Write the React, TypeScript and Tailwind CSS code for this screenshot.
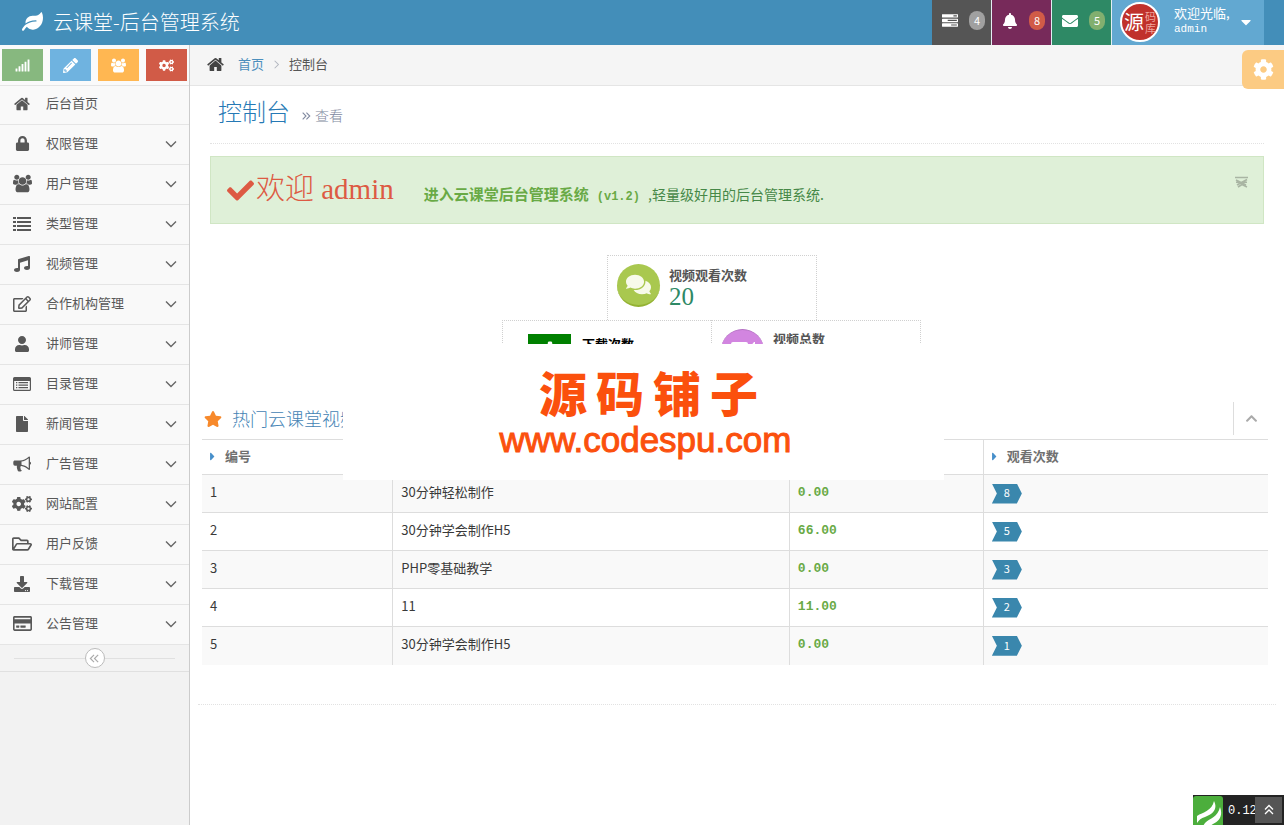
import React from 'react';
import {
  FaBell,
  FaCaretDown,
  FaCaretRight,
  FaCheck,
  FaChevronUp,
  FaCog,
  FaCogs,
  FaComments,
  FaDownload,
  FaEnvelope,
  FaFile,
  FaLeaf,
  FaLock,
  FaMusic,
  FaPencilAlt,
  FaPlus,
  FaRegCreditCard,
  FaRegEdit,
  FaRegFolderOpen,
  FaSignal,
  FaStar,
  FaUser,
} from 'react-icons/fa';

type IconProps = { className?: string };

const HomeIcon = ({ className }: IconProps) => (
  <svg viewBox="64 128 1664 1536" fill="currentColor" className={className}>
    <path d="M1472 992v480q0 26-19 45t-45 19h-384v-384h-256v384h-384q-26 0-45-19t-19-45v-480q0-1 .5-3t.5-3l575-474 575 474q1 2 1 6zm223-69l-62 74q-8 9-21 11h-3q-13 0-21-7l-692-577-692 577q-12 8-24 7-13-2-21-11l-62-74q-8-10-7-23.5t11-21.5l719-599q32-26 76-26t76 26l244 204v-195q0-14 9-23t23-9h192q14 0 23 9t9 23v408l219 182q10 8 11 21.5t-7 23.5z" />
  </svg>
);

const GroupIcon = ({ className }: IconProps) => (
  <svg viewBox="64 0 1920 1792" fill="currentColor" className={className}>
    <path d="M657 896q-162 5-265 128h-134q-82 0-138-40.5t-56-118.5q0-353 124-353 6 0 43.5 21t97.5 42.5 119 21.5q67 0 133-23-5 37-5 66 0 139 81 256zm1071 637q0 120-73 189.5t-194 69.5h-874q-121 0-194-69.5t-73-189.5q0-53 3.5-103.5t14-109 26.5-108.5 43-97.5 62-81 85.5-53.5 111.5-20q10 0 43 21.5t73 48 107 48 135 21.5 135-21.5 107-48 73-48 43-21.5q61 0 111.5 20t85.5 53.5 62 81 43 97.5 26.5 108.5 14 109 3.5 103.5zm-1024-1277q0 106-75 181t-181 75-181-75-75-181 75-181 181-75 181 75 75 181zm704 384q0 159-112.5 271.5t-271.5 112.5-271.5-112.5-112.5-271.5 112.5-271.5 271.5-112.5 271.5 112.5 112.5 271.5zm576 225q0 78-56 118.5t-138 40.5h-134q-103-123-265-128 81-117 81-256 0-29-5-66 66 23 133 23 59 0 119-21.5t97.5-42.5 43.5-21q124 0 124 353zm-128-609q0 106-75 181t-181 75-181-75-75-181 75-181 181-75 181 75 75 181z" />
  </svg>
);

const TasksIcon = ({ className }: IconProps) => (
  <svg viewBox="0 128 1792 1536" fill="currentColor" className={className}>
    <path d="M1024 1408h640v-128h-640v128zm-384-512h1024v-128h-1024v128zm640-512h384v-128h-384v128zm512 832v256q0 26-19 45t-45 19h-1664q-26 0-45-19t-19-45v-256q0-26 19-45t45-19h1664q26 0 45 19t19 45zm0-512v256q0 26-19 45t-45 19h-1664q-26 0-45-19t-19-45v-256q0-26 19-45t45-19h1664q26 0 45 19t19 45zm0-512v256q0 26-19 45t-45 19h-1664q-26 0-45-19t-19-45v-256q0-26 19-45t45-19h1664q26 0 45 19t19 45z" />
  </svg>
);

const ListIcon = ({ className }: IconProps) => (
  <svg viewBox="0 0 18 18" fill="currentColor" className={className}>
    <path d="M0 2h3v2H0zM4 2h14v2H4zM0 6h3v2H0zM4 6h14v2H4zM0 10h3v2H0zM4 10h14v2H4zM0 14h3v2H0zM4 14h14v2H4z" />
  </svg>
);

const ListAltIcon = ({ className }: IconProps) => (
  <svg viewBox="0 0 18 18" fill="currentColor" className={className}>
    <path
      fillRule="evenodd"
      d="M1.5 2h15A1.5 1.5 0 0 1 18 3.5v11a1.5 1.5 0 0 1-1.5 1.5h-15A1.5 1.5 0 0 1 0 14.5v-11A1.5 1.5 0 0 1 1.5 2zM1.2 6v8.2q0 .6.6.6h14.4q.6 0 .6-.6V6z"
    />
    <path d="M3 7h1.3v1.2H3zM5.5 7H15v1.2H5.5zM3 9.5h1.3v1.2H3zM5.5 9.5H15v1.2H5.5zM3 12h1.3v1.2H3zM5.5 12H15v1.2H5.5z" />
  </svg>
);

const BullhornIcon = ({ className }: IconProps) => (
  <svg viewBox="0 0 18 18" className={className}>
    <path
      fill="currentColor"
      fillRule="evenodd"
      d="M16 1.5c.6 0 1 .4 1 1v4.2a1.6 1.6 0 0 1 0 3v4.3c0 .6-.4 1-1 1-2.6-2.2-5-3.6-7.8-4-1 .3-1.2 1.5-.5 2.1-.6 1 .2 1.7 1.2 2.5-.6 1.2-3 1.3-4 .4-.6-1.9-1.4-3.400-.9-5.300H2A1.7 1.7 0 0 1 .3 9V7.2C.3 6.3 1 5.6 2 5.6h5c3 0 6-1.6 9-4.1zm-.3 1.8C13.3 5.2 11 6.3 8.500 6.600v3.200c2.500.3 4.800 1.500 7.200 3.400z"
    />
  </svg>
);

const CameraIcon = ({ className }: IconProps) => (
  <svg viewBox="0 0 26 20" fill="currentColor" className={className}>
    <path d="M3 1h13a2 2 0 0 1 2 2v14a2 2 0 0 1-2 2H3a2 2 0 0 1-2-2V3a2 2 0 0 1 2-2zM19 7l5-6h1v18h-1l-5-6z" />
  </svg>
);

const AngleIcon = ({ className }: IconProps) => (
  <svg viewBox="0 0 12 12" fill="none" stroke="currentColor" strokeWidth="1.4" className={className}>
    <path d="M1 3.5l5 5 5-5" />
  </svg>
);

const DoubleAngleIcon = ({ className }: IconProps) => (
  <svg viewBox="0 0 12 12" fill="none" stroke="currentColor" strokeWidth="1.3" className={className}>
    <path d="M2 2l4 4-4 4M6.5 2l4 4-4 4" />
  </svg>
);

const SHORTCUTS = [
  { label: '统计', icon: FaSignal, color: 'bg-[#87b87f]' },
  { label: '编辑', icon: FaPencilAlt, color: 'bg-[#6fb3e0]' },
  { label: '用户', icon: GroupIcon, color: 'bg-[#ffb752]' },
  { label: '设置', icon: FaCogs, color: 'bg-[#d15b47]' },
];

const MENU = [
  { name: '后台首页', icon: HomeIcon, size: 'size-4', sub: false },
  { name: '权限管理', icon: FaLock, size: 'size-[15px]', sub: true },
  { name: '用户管理', icon: GroupIcon, size: 'size-[19px]', sub: true },
  { name: '类型管理', icon: ListIcon, size: 'size-[18px]', sub: true },
  { name: '视频管理', icon: FaMusic, size: 'size-4', sub: true },
  { name: '合作机构管理', icon: FaRegEdit, size: 'size-[18px]', sub: true },
  { name: '讲师管理', icon: FaUser, size: 'size-4', sub: true },
  { name: '目录管理', icon: ListAltIcon, size: 'size-[18px]', sub: true },
  { name: '新闻管理', icon: FaFile, size: 'size-4', sub: true },
  { name: '广告管理', icon: BullhornIcon, size: 'size-[18px]', sub: true },
  { name: '网站配置', icon: FaCogs, size: 'size-5', sub: true },
  { name: '用户反馈', icon: FaRegFolderOpen, size: 'size-5', sub: true },
  { name: '下载管理', icon: FaDownload, size: 'size-4', sub: true },
  { name: '公告管理', icon: FaRegCreditCard, size: 'size-[19px]', sub: true },
];

const NOTICES = [
  { label: '任务', count: 4, icon: TasksIcon, color: 'bg-[#555]', badge: 'bg-[#a0a0a0]' },
  { label: '通知', count: 8, icon: FaBell, color: 'bg-[#772a5a]', badge: 'bg-[#d15b47]' },
  { label: '消息', count: 5, icon: FaEnvelope, color: 'bg-[#2e8965]', badge: 'bg-[#82af6f]' },
];

const VIDEOS = [
  { id: 1, title: '30分钟轻松制作', price: '0.00', views: 8 },
  { id: 2, title: '30分钟学会制作H5', price: '66.00', views: 5 },
  { id: 3, title: 'PHP零基础教学', price: '0.00', views: 3 },
  { id: 4, title: '11', price: '11.00', views: 2 },
  { id: 5, title: '30分钟学会制作H5', price: '0.00', views: 1 },
];

const Navbar = () => (
  <header className="flex h-[45px] items-stretch bg-[#438eb9] pr-5 text-white">
    <a href="#" className="flex items-center gap-[10px] pb-0.5 pl-[22px] text-[20px] font-light">
      <FaLeaf className="size-[21px]" />
      云课堂-后台管理系统
    </a>
    <nav className="ml-auto flex gap-px bg-[#e4eef4]">
      {NOTICES.map((n) => (
        <button
          key={n.label}
          aria-label={n.label}
          className={`flex w-[59px] items-center justify-end gap-[11px] pb-1 pr-1.5 ${n.color}`}
        >
          <n.icon className="size-4" />
          <span className={`flex h-[19px] w-4 items-center justify-center rounded-full text-[11px] ${n.badge}`}>
            {n.count}
          </span>
        </button>
      ))}
      <button className="flex w-[152px] items-center bg-[#62a8d1] pb-px pl-2 text-left">
        <span className="flex size-10 items-center justify-center gap-px rounded-full border-2 border-white bg-[#c0312b]">
          <span className="text-[20px] leading-none">源</span>
          <span className="w-[11px] text-[11px] leading-[12px] text-[#f0a59c]">码库</span>
        </span>
        <span className="ml-[14px] pb-0.5 text-[13px] leading-4">
          欢迎光临,
          <span className="block font-['Liberation_Mono',monospace] text-[11px]">admin</span>
        </span>
        <FaCaretDown className="ml-2 size-4" />
      </button>
    </nav>
  </header>
);

const Sidebar = () => (
  <aside className="w-[190px] shrink-0 border-r border-[#ccc] bg-[#f2f2f2]">
    <div className="flex h-10 items-center gap-[7px] bg-[#fafafa] pl-0.5">
      {SHORTCUTS.map((s) => (
        <button
          key={s.label}
          aria-label={s.label}
          className={`flex h-8 w-[41px] items-center justify-center text-white ${s.color}`}
        >
          <s.icon className="size-[15px]" />
        </button>
      ))}
    </div>
    <ul>
      {MENU.map((m) => (
        <li key={m.name} className="h-10 border-b border-[#e5e5e5] bg-[#f9f9f9] first:border-t">
          <a href="#" className="flex h-full items-center pb-1 pl-3 text-[13px] text-[#585858]">
            <span className="mr-[14px] flex w-5 justify-center pt-0.5">
              <m.icon className={m.size} />
            </span>
            {m.name}
            {m.sub && <AngleIcon className="ml-auto mr-3 mt-0.5 size-3 text-[#666]" />}
          </a>
        </li>
      ))}
    </ul>
    <div className="flex h-[27px] items-center border-b border-[#e0e0e0] bg-[#f3f3f3] px-[14px]">
      <span className="h-px flex-1 bg-[#e0e0e0]" />
      <button
        aria-label="收起菜单"
        className="flex size-5 items-center justify-center rounded-full border border-[#bbb] bg-white text-[#aaa]"
      >
        <DoubleAngleIcon className="size-[11px] rotate-180" />
      </button>
      <span className="h-px flex-1 bg-[#e0e0e0]" />
    </div>
  </aside>
);

const Breadcrumbs = () => (
  <nav className="flex h-[41px] items-center border-b border-[#e5e5e5] bg-[#f5f5f5] pb-0.5 pl-[17px] text-[13px] text-[#555]">
    <HomeIcon className="size-[17px] text-[#444]" />
    <a href="#" className="ml-[14px] text-[#4c8fbd]">
      首页
    </a>
    <AngleIcon className="mx-2 size-[9px] -rotate-90 text-[#b2b6bf]" />
    控制台
  </nav>
);

const WelcomeAlert = () => (
  <div
    role="alert"
    className="mt-3 flex h-[68px] items-center border border-[#d0e6c4] bg-[#dff0d8] pl-4 pr-[15px] text-[14px] text-[#468847]"
  >
    <FaCheck className="size-[27px] text-[#dd5a43]" />
    <span className="ml-0.5 font-['Liberation_Serif','Noto_Sans_CJK_SC',serif] text-[29px] font-light text-[#dd5a43]">
      欢迎 admin
    </span>
    <p className="ml-[30px] pt-[9px]">
      <strong className="text-[15px] text-[#69aa46]">
        进入云课堂后台管理系统
        <span className="px-2 font-['Liberation_Mono',monospace] text-[12px]">(v1.2)</span>
      </strong>
      ,轻量级好用的后台管理系统.
    </p>
    <button aria-label="关闭" className="mb-[17px] ml-auto text-[#a9b5a3]">
      <svg viewBox="0 0 13 12" fill="none" stroke="currentColor" strokeWidth="1.6" className="h-3 w-[13px]">
        <path d="M0 1.5h13M1 4l10 5M12 3.5l-10 5.5M1 6.2h11M3 11l4-2.5 5 2.5" />
      </svg>
    </button>
  </div>
);

const Stats = () => (
  <section className="mr-[46px] mt-[31px] flex flex-col items-center font-bold">
    <div className="flex h-[65px] w-[210px] border border-b-0 border-dotted border-[#d0d0d0] pl-[9px] pt-2 text-[#555]">
      <span className="flex size-[43px] items-center justify-center rounded-full border-b-2 border-[#94b233] bg-[#a9c84f] text-[#f7faea]">
        <FaComments className="size-[25px]" />
      </span>
      <div className="ml-[9px] pt-px text-[13px] leading-5">
        视频观看次数
        <div className="font-['Liberation_Serif',serif] text-[25px] font-normal leading-6 text-[#2e8965]">20</div>
      </div>
    </div>
    <div className="flex pr-px">
      <div className="flex h-[65px] w-[209px] border border-r-0 border-dotted border-[#d0d0d0] pl-[25px] pt-[13px] text-[13px] leading-5 text-black">
        <span className="flex h-9 w-[43px] justify-center bg-[#008000] pt-1.5">
          <FaPlus className="size-6 text-white" />
        </span>
        <span className="ml-[11px]">下载次数</span>
      </div>
      <div className="flex h-[65px] w-[210px] border border-dotted border-[#d0d0d0] pl-[9px] pt-2 text-[13px] leading-5 text-[#555]">
        <span className="flex size-[43px] items-center justify-center rounded-full border-t border-[#b573c4] bg-[#d285e0] text-white">
          <CameraIcon className="h-5 w-[26px]" />
        </span>
        <span className="ml-[9px]">视频总数</span>
      </div>
    </div>
  </section>
);

const HotVideos = () => (
  <section className="mt-[17px]">
    <div className="flex h-[37px] items-center pb-1 pl-0.5">
      <FaStar className="size-[18px] text-[#f7892b]" />
      <h2 className="ml-[10px] text-[18px] font-light text-[#4383b4]">热门云课堂视频</h2>
      <button
        aria-label="折叠"
        className="ml-auto flex h-[33px] w-[35px] items-center justify-center border-l border-[#ddd] text-[#aaa]"
      >
        <FaChevronUp className="size-[13px]" />
      </button>
    </div>
    <table className="w-full table-fixed border-collapse text-left text-[13px] text-[#393939]">
      <thead>
        <tr className="h-[35px] border-y border-[#ddd] text-[#707070]">
          <th className="w-[17.9%] pb-0.5 pl-1">
            <span className="flex items-center gap-1.5">
              <FaCaretRight className="size-[13px] text-[#478fca]" />
              编号
            </span>
          </th>
          <th className="w-[37.2%]" />
          <th className="w-[18.2%]" />
          <th className="border-l border-[#ddd] pb-0.5 pl-1">
            <span className="flex items-center gap-1.5">
              <FaCaretRight className="size-[13px] text-[#478fca]" />
              观看次数
            </span>
          </th>
        </tr>
      </thead>
      <tbody>
        {VIDEOS.map((v) => (
          <tr key={v.id} className="h-[38px] border-t border-[#ddd] odd:bg-[#f9f9f9]">
            <td className="px-2 pb-1">{v.id}</td>
            <td className="border-l border-[#ddd] px-2 pb-1">{v.title}</td>
            <td className="border-l border-[#ddd] px-2 pb-0.5 font-['Liberation_Mono',monospace] font-bold text-[#69aa46]">
              {v.price}
            </td>
            <td className="border-l border-[#ddd] px-2">
              <span className="flex h-5 w-[30px] items-center justify-center bg-[#3a87ad] pb-0.5 text-[11px] text-white [clip-path:polygon(0_0,25px_0,100%_50%,25px_100%,0_100%,5px_50%)]">
                {v.views}
              </span>
            </td>
          </tr>
        ))}
      </tbody>
    </table>
  </section>
);

// Site banner floating in the middle of the window
const Banner = () => (
  <div className="pointer-events-none fixed inset-0 flex items-center justify-center pb-px pl-[3px]">
    <div className="flex h-[136px] w-[601px] flex-col items-center bg-white pl-1 pt-[18px] text-[#fb500d]">
      <div className="flex gap-[9px] pl-1.5 text-[48px] font-black leading-[58px]">
        <span>源</span>
        <span>码</span>
        <span>铺</span>
        <span>子</span>
      </div>
      <div className="font-['Liberation_Sans',sans-serif] text-[35px] leading-10 [-webkit-text-stroke:1px]">
        www.codespu.com
      </div>
    </div>
  </div>
);

const TraceBar = () => (
  <div className="fixed bottom-0 right-0 flex h-[30px] items-stretch bg-[#232323] text-white">
    <svg viewBox="0 0 30 30" className="size-[30px]">
      <rect width="30" height="34" y="1" rx="3" fill="#4cae3c" />
      <path d="M4 21c6-4 15-5 17-15 4 8-1 13-9 16-4 1-6 3-8 6zM12 28c5-5 13-6 15-16 3 8 0 14-7 17l-3 2h-7z" fill="#fff" />
    </svg>
    <span className="w-8 overflow-hidden pl-[5px] font-['Liberation_Mono',monospace] text-[12px] leading-8">
      0.12
    </span>
    <button aria-label="返回顶部" className="my-0.5 mr-0.5 flex w-[27px] items-center justify-center bg-[#555]">
      <DoubleAngleIcon className="size-3 -rotate-90" />
    </button>
  </div>
);

export default function App() {
  return (
    <div className="flex min-h-screen flex-col bg-white font-['Noto_Sans_CJK_SC',sans-serif]">
      <Navbar />
      <div className="flex flex-1">
        <Sidebar />
        <main className="relative min-w-0 flex-1">
          <Breadcrumbs />
          <button
            aria-label="页面设置"
            className="absolute right-0 top-[5px] flex h-[39px] w-[42px] items-center justify-center rounded-l-md bg-[#fccb83] text-white"
          >
            <FaCog className="size-[21px]" />
          </button>
          <div className="pl-3 pr-4">
            <div className="ml-2 mr-1">
              <div className="flex h-[58px] items-center border-b border-dotted border-[#e2e2e2] pb-2 pl-2">
                <h1 className="flex items-baseline text-[24px] font-light text-[#2679b5]">
                  控制台
                  <small className="ml-[11px] flex items-center gap-1 text-[14px] text-[#8089a0]">
                    <DoubleAngleIcon className="size-[10px]" />
                    查看
                  </small>
                </h1>
              </div>
              <WelcomeAlert />
            </div>
            <Stats />
            <HotVideos />
          </div>
          <hr className="mx-2 mt-[39px] border-dotted border-[#e2e2e2]" />
        </main>
      </div>
      <Banner />
      <TraceBar />
    </div>
  );
}
